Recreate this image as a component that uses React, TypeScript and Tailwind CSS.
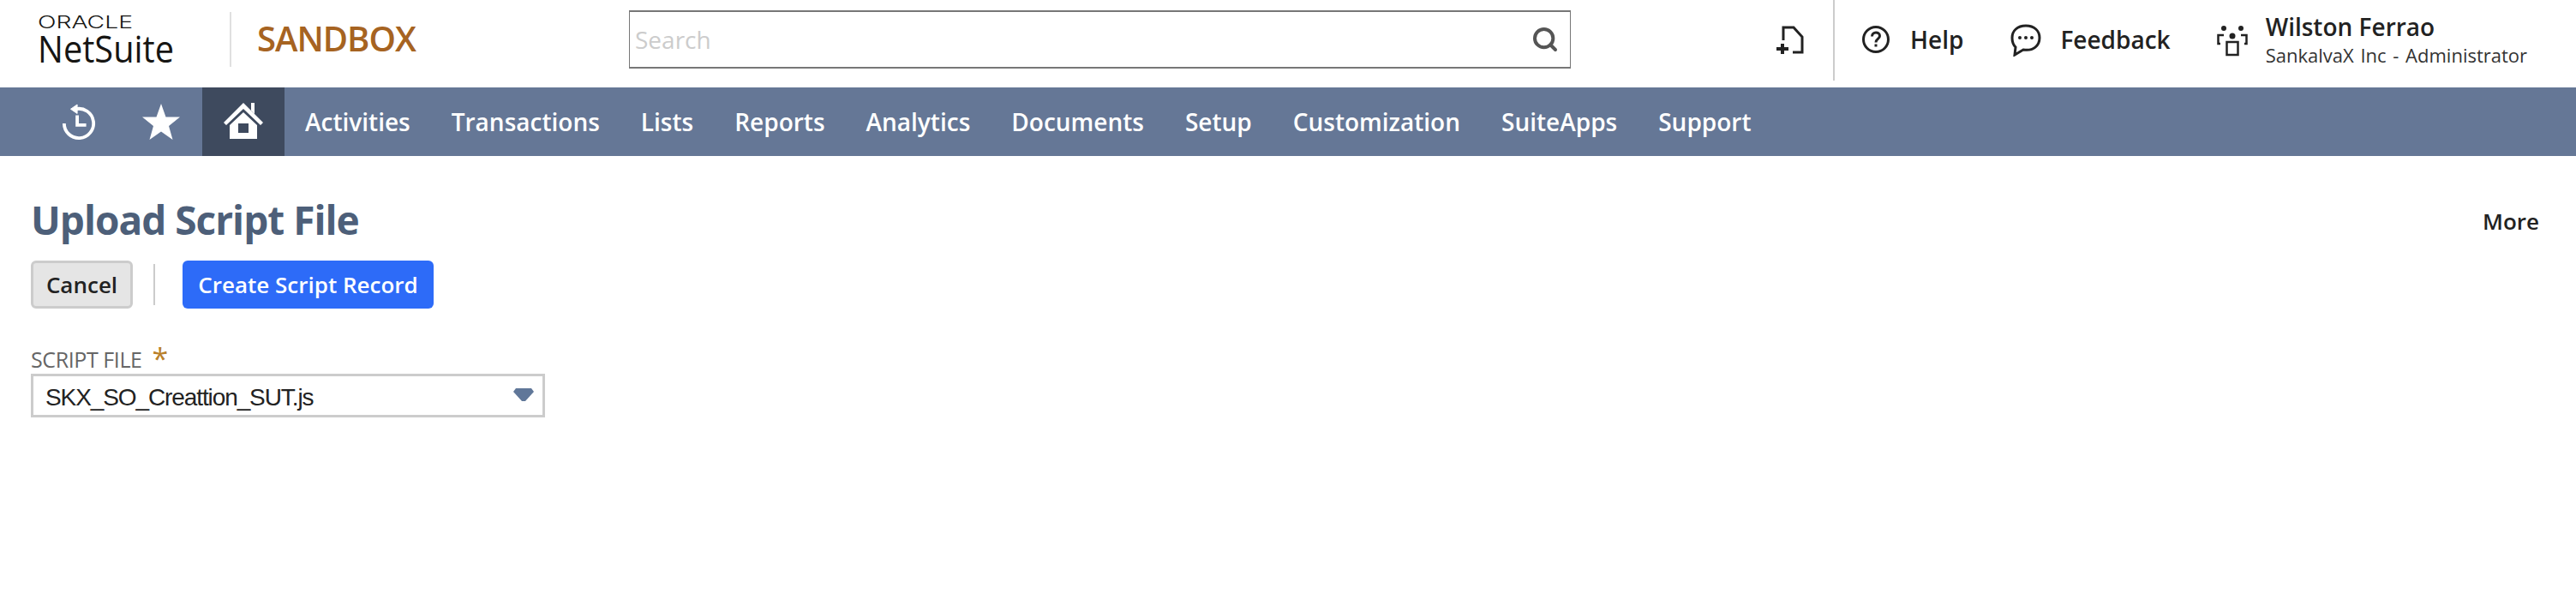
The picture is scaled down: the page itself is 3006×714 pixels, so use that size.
import { Search } from 'lucide-react';

const navItems = ['Activities', 'Transactions', 'Lists', 'Reports', 'Analytics', 'Documents', 'Setup', 'Customization', 'SuiteApps', 'Support'];

function Logo() {
  return (
    <svg width="176" height="90" viewBox="0 0 176 90" className="block">
      <text x="0" y="23" fontFamily="Inter, sans-serif" fontSize="20.5" fontWeight="300" fill="#161513" textLength="111" lengthAdjust="spacingAndGlyphs">
        ORACLE
      </text>
      <text x="0" y="63" fontFamily="'Open Sans', sans-serif" fontSize="44" fontWeight="400" fill="#161513" textLength="159" lengthAdjust="spacingAndGlyphs">
        NetSuite
      </text>
    </svg>
  );
}

function HistoryIcon() {
  return (
    <svg width="42" height="44" viewBox="0 0 42 44" fill="none" stroke="white" strokeWidth="4">
      <path d="M17 6.5 A18 18 0 1 1 3 24" />
      <path d="M11 6.5 L19 1 V12 Z" fill="white" strokeWidth="1" />
      <path d="M19 14 V26 H30" />
    </svg>
  );
}

function StarIcon() {
  return (
    <svg width="44" height="42" viewBox="0 0 44 42" fill="white">
      <path d="M22 0 L27.5 15.5 L44 15.5 L31 26 L35.5 42 L22 32.5 L8.5 42 L13 26 L0 15.5 L16.5 15.5 Z" />
    </svg>
  );
}

function HomeIcon() {
  return (
    <svg width="46" height="44" viewBox="0 0 46 44" fill="white">
      <path d="M32 0 H36 V13 L32 9 Z" />
      <path d="M23 0 L46 23 L43 26 L23 7 L3 26 L0 23 Z" />
      <path fillRule="evenodd" d="M23 11 L39 26 V42 H7 V26 Z M17 24 V35 H29 V24 Z" />
    </svg>
  );
}

function NewFileIcon() {
  return (
    <svg width="34" height="34" viewBox="0 0 34 34" fill="none" stroke="#222" strokeWidth="3">
      <path d="M9 17 V2 H21 L31 13 V31 H20" />
      <path d="M8 21 V33 M1 27 H15" strokeWidth="4" />
    </svg>
  );
}

function HelpIcon() {
  return (
    <svg width="32" height="32" viewBox="0 0 32 32" fill="none" stroke="#222" strokeWidth="3">
      <circle cx="16" cy="16" r="14.5" />
      <path d="M11.5 12.5 C11.5 6.5 20.5 6.5 20.5 12 C20.5 15.5 16 15.5 16 19.5" />
      <path d="M16 21.5 V24.5" />
    </svg>
  );
}

function FeedbackIcon() {
  return (
    <svg width="36" height="38" viewBox="0 0 36 38" fill="none" stroke="#222" strokeWidth="3">
      <path d="M18 2 C8 2 2 8 2 16 C2 21 4 25 6 27 L5 36 L15 30 C27 32 34 25 34 16 C34 8 28 2 18 2 Z" />
      <circle cx="11" cy="16" r="2" fill="#222" stroke="none" />
      <circle cx="18" cy="16" r="2" fill="#222" stroke="none" />
      <circle cx="25" cy="16" r="2" fill="#222" stroke="none" />
    </svg>
  );
}

function RolesIcon() {
  return (
    <svg width="36" height="36" viewBox="0 0 36 36" fill="#222">
      <circle cx="8" cy="3" r="3" />
      <circle cx="28" cy="3" r="3" />
      <circle cx="18" cy="12" r="3.5" />
      <g fill="none" stroke="#222" strokeWidth="2.5">
        <path d="M8 11 H1.5 V21 H4" />
        <path d="M28 11 H34.5 V21 H32" />
        <path d="M11.5 19 H24.5 V34 H11.5 Z" />
      </g>
    </svg>
  );
}

export default function App() {
  return (
    <div className="min-h-[714px] w-[3006px] bg-white font-['Open_Sans',sans-serif] text-[#222]">
      <header className="flex h-[102px] items-start">
        <div className="ml-[44px] mt-[10px] w-[176px] shrink-0">
          <Logo />
        </div>
        <div className="ml-[48px] mt-[14px] h-[64px] w-[2px] shrink-0 bg-[#e0e0e0]" />
        <div className="ml-[30px] mt-[19px] w-[190px] shrink-0 whitespace-nowrap text-[40px] font-semibold leading-[52px] tracking-[-1px] text-[#a66321]">SANDBOX</div>

        <div className="ml-[244px] mt-[12px] flex h-[68px] w-[1099px] shrink-0 items-center justify-between border-x border-y-2 border-x-[#777] border-y-[#777] pl-[6px] pr-[13px]">
          <span className="text-[28px] text-[#cccccc]">Search</span>
          <Search className="h-[32px] w-[32px] text-[#555]" strokeWidth={3} />
        </div>

        <div className="ml-[239px] mt-[30px] shrink-0">
          <NewFileIcon />
        </div>
        <div className="ml-[33px] h-[94px] w-[2px] shrink-0 bg-[#cccccc]" />
        <div className="ml-[32px] mt-[30px] shrink-0">
          <HelpIcon />
        </div>
        <div className="ml-[24px] mt-[26px] shrink-0 text-[28px] font-semibold leading-[40px]">Help</div>
        <div className="ml-[55px] mt-[28px] shrink-0">
          <FeedbackIcon />
        </div>
        <div className="ml-[22px] mt-[26px] shrink-0 text-[28px] font-semibold leading-[40px]">Feedback</div>
        <div className="ml-[54px] mt-[30px] shrink-0">
          <RolesIcon />
        </div>
        <div className="ml-[21px] mt-[13px] shrink-0 whitespace-nowrap">
          <div className="text-[28px] font-semibold leading-[36px]">Wilston Ferrao</div>
          <div className="text-[22px] leading-[30px] text-[#333] [word-spacing:2px]">SankalvaX Inc - Administrator</div>
        </div>
      </header>

      <nav className="flex h-[80px] items-center bg-[#657796]">
        <div className="ml-[72px] flex w-[40px] justify-center">
          <HistoryIcon />
        </div>
        <div className="ml-[54px] flex w-[44px] justify-center">
          <StarIcon />
        </div>
        <div className="ml-[26px] flex h-full w-[96px] items-center justify-center bg-[#3e4a5e]">
          <HomeIcon />
        </div>
        <div className="ml-[24px] flex gap-[48px]">
          {navItems.map((item) => (
            <span key={item} className="whitespace-nowrap text-[28px] font-semibold text-white">
              {item}
            </span>
          ))}
        </div>
      </nav>

      <main className="px-[36px]">
        <div className="mt-[44px] flex items-center justify-between">
          <h1 className="text-[46px] font-bold leading-[60px] tracking-[-1px] text-[#4d5f79]">Upload Script File</h1>
          <span className="mr-[7px] mt-[4px] text-[26px] font-semibold">More</span>
        </div>
        <div className="mt-[18px] flex items-center">
          <button className="h-[56px] w-[119px] rounded-[6px] border-[3px] border-[#cccccc] bg-[#e5e5e5] text-[26px] font-semibold text-[#222]">Cancel</button>
          <div className="ml-[24px] h-[48px] w-[2px] bg-[#cccccc]" />
          <button className="ml-[32px] h-[56px] w-[293px] rounded-[6px] bg-[#2d6bf8] text-[26px] font-semibold text-white">Create Script Record</button>
        </div>
        <div className="mt-[44px] flex items-start text-[25px] leading-[30px] tracking-[-0.4px] text-[#666]">
          <span>SCRIPT FILE</span>
          <span className="ml-[12px] mt-[-1px] text-[34px] leading-[30px] text-[#b9802a]">*</span>
        </div>
        <div className="mt-[2px] flex h-[51px] w-[600px] items-center justify-between border-[3px] border-[#cccccc] pl-[14px] pr-[10px]">
          <span className="mt-[5px] font-['Liberation_Sans',Arial,sans-serif] text-[28px] tracking-[-1.1px] text-[#222]">SKX_SO_Creattion_SUT.js</span>
          <svg width="24" height="15" viewBox="0 0 24 15" className="mb-[2px]" fill="#607799">
            <path d="M3 0 H21 L24 4 L14 15 H10 L0 4 Z" />
          </svg>
        </div>
      </main>
    </div>
  );
}
